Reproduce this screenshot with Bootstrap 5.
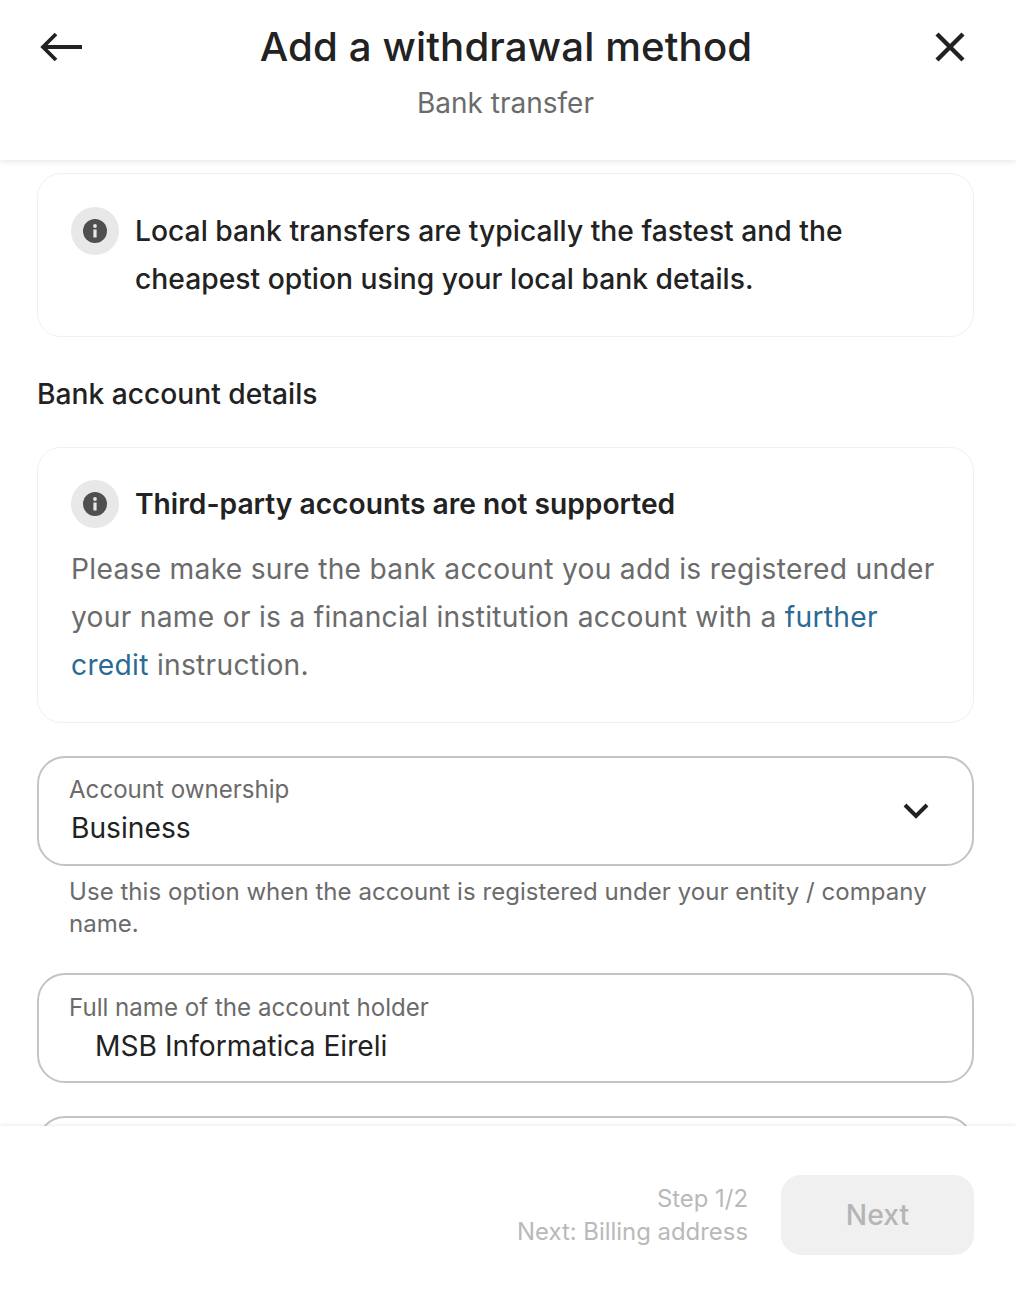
<!DOCTYPE html>
<html lang="en"><head><meta charset="utf-8"><title>Add a withdrawal method</title>
<link href="https://cdn.jsdelivr.net/npm/bootstrap@5.3.0/dist/css/bootstrap.min.css" rel="stylesheet">
<style>
html,body{height:1294px;margin:0;overflow:hidden;background:#fff}
body{font-family:Inter,"Liberation Sans",sans-serif;color:#222}
.shell{height:1294px}
.top-bar{height:160px;padding:0 51px 0 40px;position:relative;z-index:2;box-shadow:0 1px 6px rgba(0,0,0,.12)}
.top-row{height:93px}
.top-title{font-size:40.2px;line-height:52px;font-weight:500;margin:0 0 0 -5px;letter-spacing:.12px}
.top-sub{font-size:28px;line-height:32px;color:#6b6b6b;margin-top:-6px;padding-left:6px}
.scroller{flex:1;min-height:0;overflow:hidden;padding:13px 42px 0 37px}
.note{border:1.5px solid #f0f0f0;border-radius:24px;padding:33px 33px}
.note-one{height:164px}
.note-two{height:276px;margin-top:0;padding-top:32px}
.info-disc{width:48px;height:48px;border-radius:50%;background:#e8e8e8;flex:none}
.note-text{font-size:28.25px;line-height:48px;font-weight:500;color:#222;margin:0 0 0 16px}
.section-h{font-size:28.2px;line-height:40px;font-weight:500;margin:37px 0 33px}
.note-h{font-size:28.2px;line-height:48px;font-weight:600;margin:0 0 0 16px}
.note-body{font-size:28.2px;line-height:48px;color:#6b6b6b;margin:17px 0 0;letter-spacing:.28px}
.note-body a{color:#2a6b94;text-decoration:none}
.fieldbox{border:2px solid #c4c4c4;border-radius:28px;height:110px;padding:17px 30px;background:#fff}
.field-label{font-size:24.1px;line-height:32px;color:#6b6b6b}
.field-value{font-size:28.2px;line-height:40px;color:#222;margin-top:2px;padding-left:2px}
.field-indent{padding-left:26px}
.help-text{font-size:24px;line-height:32px;color:#6b6b6b;margin:10px 30px 33px 32px;letter-spacing:.05px}
.chev{margin-right:13px}
.gap-top{margin-top:33px}
.bottom-bar{height:168px;position:relative;z-index:2;background:#fff;padding:49px 42px 0 0;box-shadow:0 -1px 4px rgba(0,0,0,.08)}
.step-text{font-size:23.9px;line-height:33px;color:#b9b9b9;text-align:right;margin:7px 33px 0 0}
.next-btn{--bs-btn-disabled-bg:#f0f0f0;--bs-btn-disabled-color:#b5b5b5;--bs-btn-disabled-border-color:#f0f0f0;--bs-btn-disabled-opacity:1;width:193px;height:80px;border-radius:20px;font-size:28.3px;font-weight:500}
</style></head>
<body>
<div class="shell d-flex flex-column">
  <header class="top-bar bg-white">
    <div class="top-row d-flex justify-content-between align-items-center">
      <svg width="42" height="30" viewBox="0 0 42 30" fill="none" stroke="#222" stroke-width="3.8"><path d="M42 15H3"/><path d="M16 2 3 15l13 13"/></svg>
      <h1 class="top-title">Add a withdrawal method</h1>
      <svg width="30" height="30" viewBox="0 0 30 30" fill="none" stroke="#222" stroke-width="4.4"><path d="M2 2l26 26M28 2 2 28"/></svg>
    </div>
    <div class="top-sub text-center">Bank transfer</div>
  </header>
  <main class="scroller">
    <section class="note note-one d-flex align-items-start">
      <span class="info-disc d-flex align-items-center justify-content-center"><svg width="24" height="24" viewBox="0 0 24 24"><circle cx="12" cy="12" r="12" fill="#4f4f4f"/><rect x="10.4" y="10.5" width="3.2" height="8" fill="#e8e8e8"/><circle cx="12" cy="7" r="1.9" fill="#e8e8e8"/></svg></span>
      <p class="note-text">Local bank transfers are typically the fastest and the cheapest option using your local bank details.</p>
    </section>
    <h2 class="section-h">Bank account details</h2>
    <section class="note note-two">
      <div class="d-flex align-items-center">
        <span class="info-disc d-flex align-items-center justify-content-center"><svg width="24" height="24" viewBox="0 0 24 24"><circle cx="12" cy="12" r="12" fill="#4f4f4f"/><rect x="10.4" y="10.5" width="3.2" height="8" fill="#e8e8e8"/><circle cx="12" cy="7" r="1.9" fill="#e8e8e8"/></svg></span>
        <h3 class="note-h">Third-party accounts are not supported</h3>
      </div>
      <p class="note-body">Please make sure the bank account you add is registered under your name or is a financial institution account with a <a href="#">further credit</a> instruction.</p>
    </section>
    <div class="fieldbox gap-top d-flex justify-content-between align-items-center">
      <div><div class="field-label">Account ownership</div><div class="field-value">Business</div></div>
      <svg class="chev" width="26" height="18" viewBox="0 0 26 18" fill="none" stroke="#222" stroke-width="4"><path d="M2 3l11 11L24 3"/></svg>
    </div>
    <div class="help-text">Use this option when the account is registered under your entity / company name.</div>
    <div class="fieldbox">
      <div class="field-label">Full name of the account holder</div>
      <div class="field-value field-indent">MSB Informatica Eireli</div>
    </div>
    <div class="fieldbox gap-top"></div>
  </main>
  <footer class="bottom-bar d-flex justify-content-end align-items-start">
    <div class="step-text"><div>Step 1/2</div><div>Next: Billing address</div></div>
    <button class="next-btn btn" type="button" disabled>Next</button>
  </footer>
</div>
<script src="https://cdn.jsdelivr.net/npm/bootstrap@5.3.0/dist/js/bootstrap.bundle.min.js"></script>
</body></html>
